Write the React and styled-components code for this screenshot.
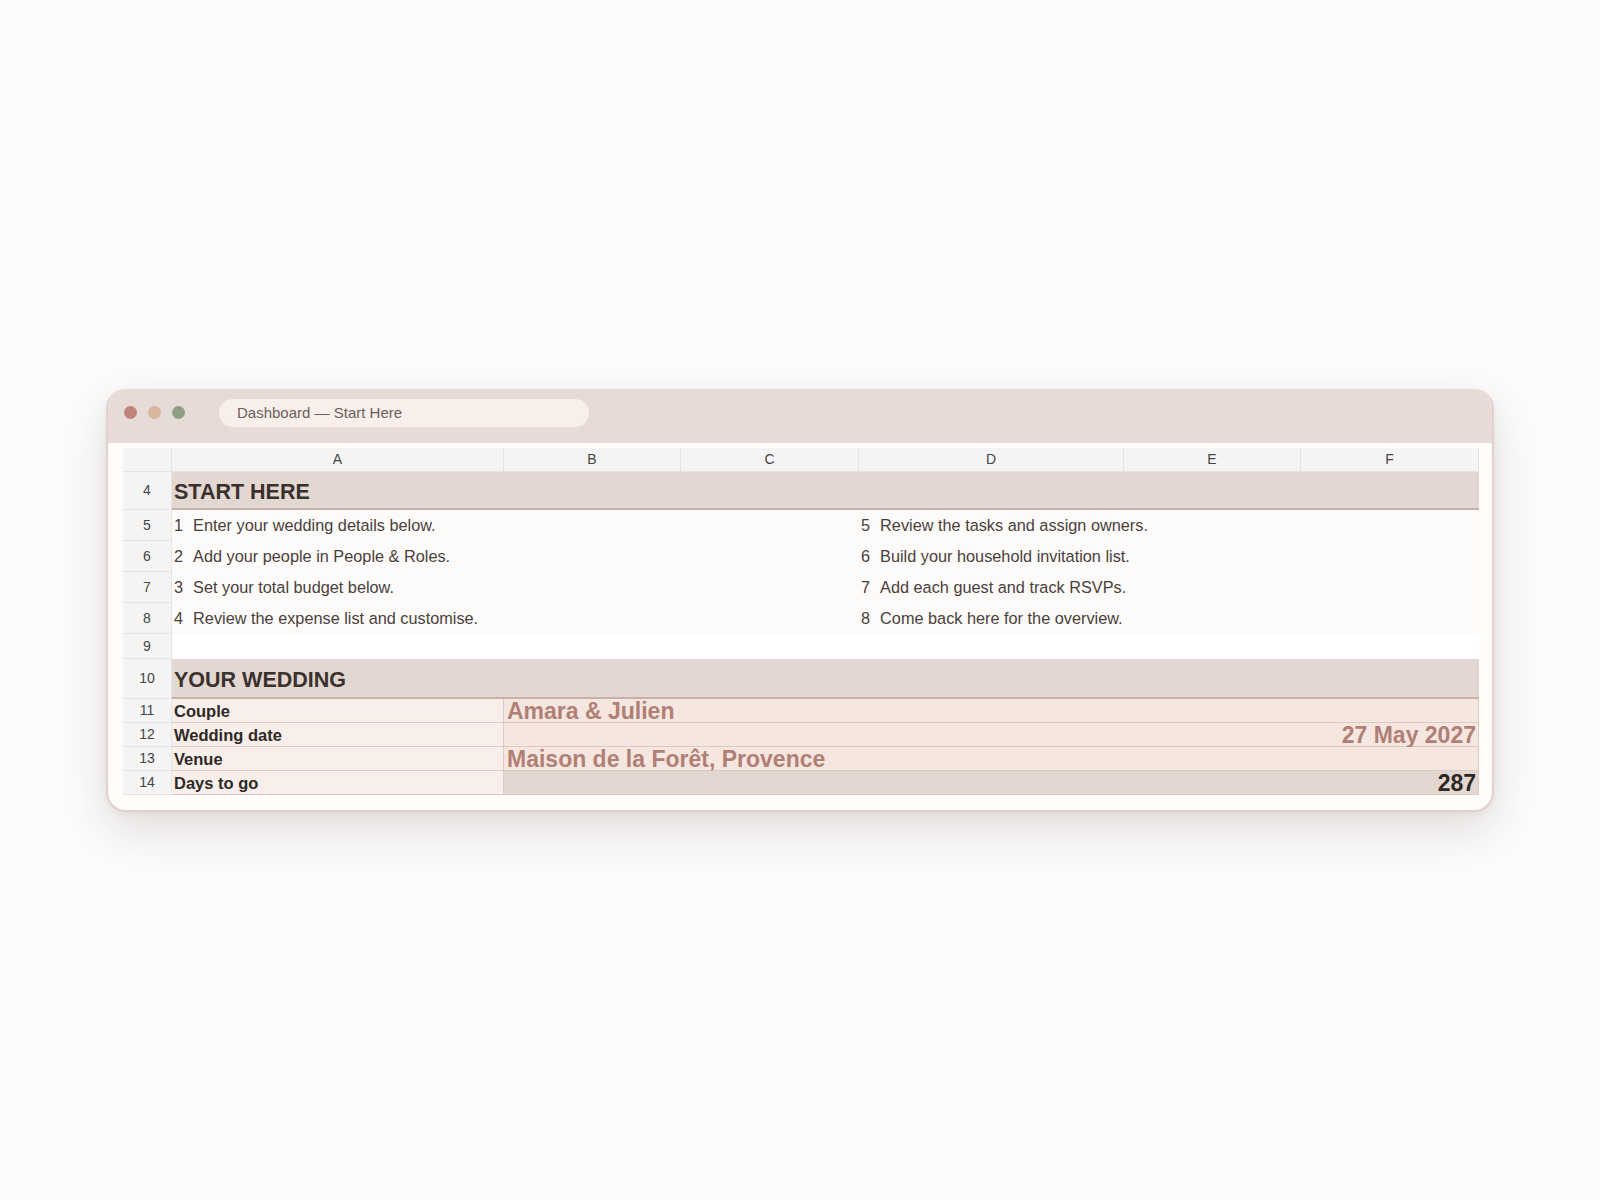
import React from 'react';
import styled, { createGlobalStyle } from 'styled-components';

const GlobalStyle = createGlobalStyle`
  html, body {
    margin: 0;
    padding: 0;
    background: #fdfcfc;
    font-family: "Liberation Sans", Arial, sans-serif;
  }
`;

const Page = styled.div`
  width: 1600px;
  height: 1200px;
  display: flex;
  align-items: center;
  justify-content: center;
`;

const Window = styled.div`
  width: 1388px;
  box-sizing: border-box;
  border: 2px solid #e2d2ca;
  border-top: none;
  border-radius: 20px;
  background: #fffcfa;
  overflow: hidden;
  box-shadow: 0 18px 48px rgba(70, 50, 40, 0.16), 0 2px 8px rgba(0, 0, 0, 0.05);
`;

const TitleBar = styled.div`
  height: 54px;
  box-sizing: border-box;
  background: #e6dbd6;
  display: flex;
  align-items: center;
  padding: 0 0 6px 16px;
  gap: 11px;
`;

const Dot = styled.span`
  width: 13px;
  height: 13px;
  border-radius: 50%;
  background: ${p => p.color};
`;

const AddressPill = styled.div`
  margin-left: 23px;
  width: 370px;
  height: 28px;
  border-radius: 14px;
  background: #f8efea;
  display: flex;
  align-items: center;
  padding-left: 18px;
  box-sizing: border-box;
  font-size: 15px;
  color: #6b5f5a;
`;

const Content = styled.div`
  padding: 5px 13px 15px 15px;
`;

const Sheet = styled.div`
  display: grid;
  grid-template-columns: 49px 332px 177px 178px 265px 177px 178px;
  grid-template-rows: 24px 38px 31px 31px 31px 31px 25px 40px 24px 24px 24px 24px;
`;

const HeaderCell = styled.div`
  background: #f4f4f4;
  border-right: 1px solid #e3e3e3;
  border-bottom: 1px solid #e3e3e3;
  display: flex;
  align-items: center;
  justify-content: center;
  font-size: 14px;
  color: #444;
  box-sizing: border-box;
`;

const RowNum = styled(HeaderCell)`
  border-right: 1px solid #e6e6e6;
  color: #444;
`;

const SectionCell = styled.div`
  grid-column: 2 / span 6;
  background: #e3d7d2;
  border-bottom: 2px solid #cbb0a7;
  display: flex;
  align-items: center;
  padding: 5px 0 0 2px;
  font-size: 21.5px;
  font-weight: 700;
  color: #3a312d;
  box-sizing: border-box;
`;

const StepCell = styled.div`
  grid-column: ${p => p.span};
  background: ${p => (p.blank ? '#ffffff' : '#fdfbfa')};
  display: flex;
  align-items: center;
  padding: 1px 0 0 2px;
  font-size: 16.3px;
  color: #4a403b;
  white-space: nowrap;
`;

const StepNum = styled.span`
  margin-right: 10px;
`;

const Label = styled.div`
  background: #f8efeb;
  border-right: 1px solid #dccbc4;
  border-bottom: 1px solid #dccbc4;
  display: flex;
  align-items: center;
  padding: 2px 0 0 2px;
  font-size: 16.5px;
  font-weight: 700;
  color: #2f2926;
  box-sizing: border-box;
`;

const Value = styled.div`
  grid-column: 3 / span 5;
  background: ${p => (p.muted ? '#e3d7d2' : '#f6e6e0')};
  border-right: 1px solid #dccbc4;
  border-bottom: 1px solid #dccbc4;
  display: flex;
  align-items: center;
  justify-content: ${p => (p.right ? 'flex-end' : 'flex-start')};
  padding: 2px 2px 0 3px;
  font-size: 23px;
  line-height: 24px;
  font-weight: 700;
  color: ${p => (p.dark ? '#2e2825' : '#b07f75')};
  box-sizing: border-box;
  white-space: nowrap;
`;

const columns = ['A', 'B', 'C', 'D', 'E', 'F'];

const steps = [
  ['1', 'Enter your wedding details below.', '5', 'Review the tasks and assign owners.'],
  ['2', 'Add your people in People & Roles.', '6', 'Build your household invitation list.'],
  ['3', 'Set your total budget below.', '7', 'Add each guest and track RSVPs.'],
  ['4', 'Review the expense list and customise.', '8', 'Come back here for the overview.'],
];

const details = [
  { label: 'Couple', value: 'Amara & Julien' },
  { label: 'Wedding date', value: '27 May 2027', right: true },
  { label: 'Venue', value: 'Maison de la Forêt, Provence' },
  { label: 'Days to go', value: '287', right: true, dark: true, muted: true },
];

export default function App() {
  return (
    <>
      <GlobalStyle />
      <Page>
        <Window>
          <TitleBar>
            <Dot color="#bf847c" />
            <Dot color="#d8b69b" />
            <Dot color="#8fa084" />
            <AddressPill>Dashboard — Start Here</AddressPill>
          </TitleBar>
          <Content>
            <Sheet>
              <HeaderCell />
              {columns.map(c => (
                <HeaderCell key={c}>{c}</HeaderCell>
              ))}

              <RowNum>4</RowNum>
              <SectionCell>START HERE</SectionCell>

              {steps.map((s, i) => (
                <React.Fragment key={s[0]}>
                  <RowNum>{5 + i}</RowNum>
                  <StepCell span="2 / span 3">
                    <StepNum>{s[0]}</StepNum>
                    {s[1]}
                  </StepCell>
                  <StepCell span="5 / span 3">
                    <StepNum>{s[2]}</StepNum>
                    {s[3]}
                  </StepCell>
                </React.Fragment>
              ))}

              <RowNum>9</RowNum>
              <StepCell span="2 / span 6" blank />

              <RowNum>10</RowNum>
              <SectionCell>YOUR WEDDING</SectionCell>

              {details.map((d, i) => (
                <React.Fragment key={d.label}>
                  <RowNum>{11 + i}</RowNum>
                  <Label>{d.label}</Label>
                  <Value right={d.right} dark={d.dark} muted={d.muted}>
                    {d.value}
                  </Value>
                </React.Fragment>
              ))}
            </Sheet>
          </Content>
        </Window>
      </Page>
    </>
  );
}
